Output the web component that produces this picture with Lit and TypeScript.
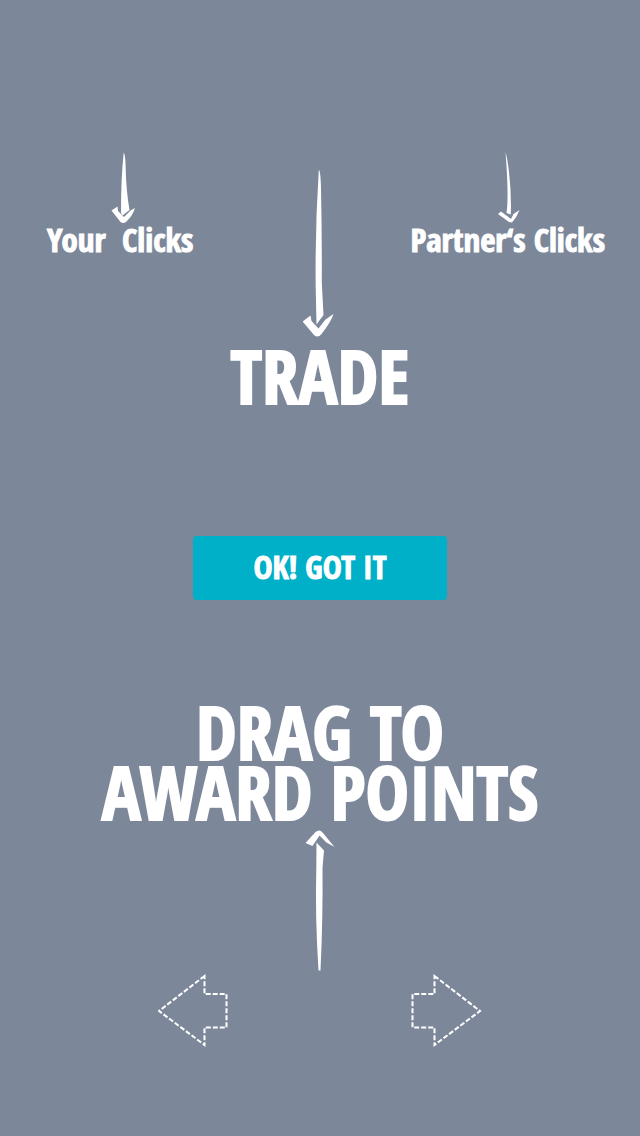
import { LitElement, html, css } from "lit";
import { customElement, state } from "lit/decorators.js";

@customElement("app-root")
export class AppRoot extends LitElement {
  @state() private open = true;

  static styles = css`
    :host {
      display: block;
      min-height: 100vh;
      background: #7c879a;
      color: #fff;
      font-family: "Avenir Next Condensed", "Open Sans Condensed", "Noto Sans Condensed", "Liberation Sans Narrow", "Roboto Condensed", sans-serif;
      font-weight: 700;
      -webkit-text-stroke: 1px currentColor;
    }
    .coach {
      display: flex;
      flex-direction: column;
      align-items: center;
      padding: 152px 0 88px;
    }
    .scores {
      align-self: stretch;
      display: grid;
      grid-template-columns: minmax(0, 1fr) auto minmax(0, 1fr);
    }
    .hint {
      display: flex;
      flex-direction: column;
      align-items: center;
      margin: 0;
      font-size: 33px;
      line-height: 32px;
      white-space: pre;
    }
    .yours {
      justify-self: start;
      padding-left: 47px;
    }
    .partner {
      justify-self: end;
      padding-right: 35px;
    }
    .trade {
      padding-top: 16px;
      font-size: 73px;
      line-height: 76px;
      -webkit-text-stroke-width: 2px;
    }
    .headline {
      margin: 0;
      font-size: 73px;
      line-height: 60px;
      text-align: center;
      -webkit-text-stroke-width: 2px;
    }
    .ok {
      width: 254px;
      height: 64px;
      margin: 122px 0 102px;
      padding: 0 0 4px;
      border: 0;
      border-radius: 4px;
      background: #00b0c9;
      color: inherit;
      font: inherit;
      font-size: 32px;
      cursor: pointer;
    }
    .drag {
      display: flex;
      justify-content: center;
      gap: 180px;
      padding-top: 3px;
    }
    svg {
      display: block;
      fill: #fff;
    }
    .outline {
      fill: none;
      stroke: #fff;
      stroke-width: 2;
      stroke-dasharray: 5 2;
    }
  `;

  render() {
    if (!this.open) return html``;
    return html`
      <main class="coach">
        <section class="scores">
          <p class="hint yours">
            <svg width="30" height="72" viewBox="0 0 30 72" aria-hidden="true">
              <path d="M18.7 0.5Q20.400 3 20.600 14Q21 38 24.500 58L17.500 63.500L16 61Q16 25 18.700 0.500Z" />
              <path d="M6.500 58.500L12.500 54.500L13 59L19 65L25.500 58.500L30 56Q28 63 22 69Q19 72.500 15.500 70Z" />
            </svg><span>Your  Clicks</span>
          </p>
          <p class="hint trade">
            <svg width="34" height="170" viewBox="0 0 34 170" aria-hidden="true">
              <path d="M15.800 2Q17.500 2 18 20Q19 70 18.800 115L20.500 147L13.500 156.500L12.700 120Q12 60 15.800 2Z" />
              <path d="M-.5 153.500L7.500 147.500L8.500 153L15.500 160.500L22.500 151.500L30.500 146Q28 154 18.500 166Q15 170.500 11 167Z" />
            </svg><span>TRADE</span>
          </p>
          <p class="hint partner">
            <svg width="24" height="72" viewBox="-1 0 24 72" aria-hidden="true">
              <path d="M8.500 0Q10.500 7 12 20Q14.500 42 13.800 62.500L9.500 61Q12 45 8.500 0Z" />
              <path d="M1 62L4 59.500L14 67L16.500 62L22.500 58Q20 65 15 70.500L12 70Z" />
            </svg><span>Partner‘s Clicks</span>
          </p>
        </section>

        <button class="ok" @click=${() => (this.open = false)}>OK! GOT IT</button>

        <h1 class="headline">DRAG TO<br />AWARD POINTS</h1>
        <svg width="34" height="149" viewBox="0 0 34 149" aria-hidden="true">
          <path d="M2.500 21L12.500 10Q17 6.500 20 11L31.500 25L23.500 20.500L16.500 13.500L9.500 24Z" />
          <path d="M13.500 20.500L21 28.500L19.500 46Q20 95 17.500 148.500H15.500Q12 95 13.300 46Z" />
        </svg>
        <div class="drag">
          <svg width="72" height="74" viewBox="0 0 72 74" role="img" aria-label="Drag left">
            <path class="outline" d="M46.500 2L1 37L46.500 71V53.500H68.500V20H46.500Z" />
          </svg>
          <svg width="72" height="74" viewBox="0 0 72 74" role="img" aria-label="Drag right">
            <path class="outline" d="M24.500 2L70 37L24.500 71V53.500H2.500V20H24.500Z" />
          </svg>
        </div>
      </main>
    `;
  }
}
